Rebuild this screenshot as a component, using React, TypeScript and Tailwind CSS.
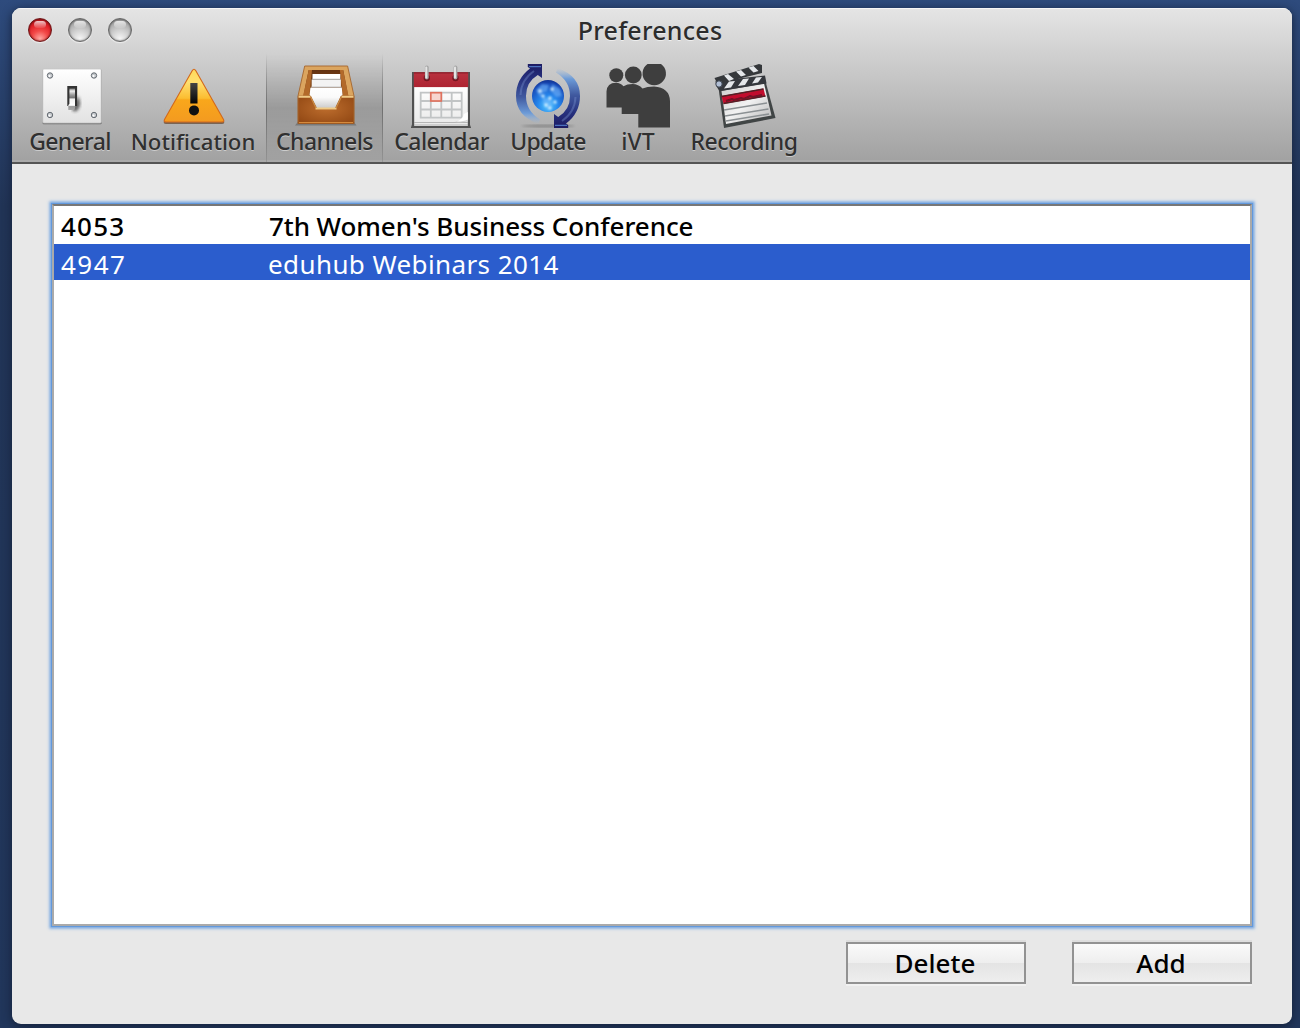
import type { ReactNode } from "react";

function Icon({ children }: { children: ReactNode }) {
  return (
    <svg viewBox="0 0 64 64" className="block size-16 overflow-visible">
      {children}
    </svg>
  );
}

function SwitchIcon() {
  return (
    <Icon>
      <defs>
        <linearGradient id="plate" x2="0" y2="1">
          <stop offset="0" stopColor="#fff" />
          <stop offset="1" stopColor="#e2e2e2" />
        </linearGradient>
        <linearGradient id="lever" x2="0" y2="1">
          <stop offset="0" stopColor="#777" />
          <stop offset=".12" stopColor="#eee" />
          <stop offset=".3" stopColor="#999" />
          <stop offset=".42" stopColor="#777" />
          <stop offset=".5" stopColor="#f4f4f4" />
          <stop offset=".78" stopColor="#fff" />
          <stop offset=".84" stopColor="#999" />
          <stop offset="1" stopColor="#aaa" />
        </linearGradient>
        <filter id="soft"><feGaussianBlur stdDeviation="1.7" /></filter>
      </defs>
      <rect x="2.6" y="5.6" width="59" height="54.6" rx="1" fill="#6d6d6d" />
      <rect x="2.8" y="5" width="58.4" height="54" rx="1" fill="url(#plate)" stroke="#c5c5c5" strokeWidth=".8" />
      {[[10, 11.5], [54, 11.5], [10, 51], [54, 51]].map(([x, y]) => (
        <g key={`${x}-${y}`}>
          <circle cx={x} cy={y} r="2.7" fill="#c4c8cc" stroke="#666c73" strokeWidth="1" />
          <circle cx={x - 0.5} cy={y + 0.6} r="1.1" fill="#fff" />
        </g>
      ))}
      <path d="M32 46l6-14q4 7 1 12-3 6-7 2z" fill="#222" opacity=".65" filter="url(#soft)" />
      <rect x="27.3" y="22" width="9.8" height="20" fill="#333" />
      <path d="M29.4 24.500h5.600V44l-.7 2H28.300V41l1.100-1z" fill="url(#lever)" />
    </Icon>
  );
}

function WarningIcon() {
  return (
    <Icon>
      <defs>
        <linearGradient id="warn" x2="0" y2="1">
          <stop offset="0" stopColor="#ffd95a" />
          <stop offset=".25" stopColor="#ffdf70" />
          <stop offset=".55" stopColor="#fbbd31" />
          <stop offset=".58" stopColor="#f9a71b" />
          <stop offset="1" stopColor="#f39a20" />
        </linearGradient>
        <linearGradient id="bang" x2="0" y2="1">
          <stop offset="0" stopColor="#444" />
          <stop offset="1" stopColor="#050505" />
        </linearGradient>
      </defs>
      <path d="M30.3 7.4Q32 4.4 33.7 7.4L62 57q1 3-2 3H4q-3 0-2-3z" fill="#5b3a20" opacity=".65" />
      <path d="M30.3 6.6Q32 3.8 33.7 6.6L61.5 55.4q1.2 2.6-1.8 2.6H4.3q-3 0-1.8-2.6z" fill="url(#warn)" stroke="#d3691c" strokeWidth="1.1" />
      <rect x="28.3" y="19" width="7.2" height="20.5" fill="url(#bang)" />
      <circle cx="32" cy="46.4" r="5" fill="#111" />
    </Icon>
  );
}

function TrayIcon() {
  return (
    <Icon>
      <defs>
        <linearGradient id="inside" x2="0" y2="1">
          <stop offset="0" stopColor="#633211" />
          <stop offset="1" stopColor="#9a5a25" />
        </linearGradient>
        <radialGradient id="front" cx=".5" cy=".45" r=".65">
          <stop offset="0" stopColor="#bd6d2d" />
          <stop offset="1" stopColor="#944a15" />
        </radialGradient>
        <linearGradient id="sheet" x2="0" y2="1">
          <stop offset="0" stopColor="#fff" />
          <stop offset=".45" stopColor="#fafafa" />
          <stop offset="1" stopColor="#c8c8c8" />
        </linearGradient>
      </defs>
      <path d="M1 61.5l4-5h54l3.5 5z" fill="#333" opacity=".35" />
      <path d="M10.7 2h42.9L60 32v27.500H4V32z" fill="#dba55f" stroke="#a5652c" strokeWidth=".9" />
      <path d="M14.7 6h34.5l5.4 27H9z" fill="url(#inside)" />
      <path d="M14.7 6h3.300L15 33H9z" fill="#b36a2a" />
      <path d="M49.2 6h-3.300L49 33h5.600z" fill="#b36a2a" />
      <path d="M18.5 10h27.8v5.500H18.5z" fill="#fff" />
      <path d="M17.7 15.500h29.200V23H17.7z" fill="#f3f3f3" />
      <path d="M18 15.3h28.600M17 23.2h30.700" stroke="#aaa" strokeWidth="1" />
      <path d="M16.4 23.8h31.400L48.5 31 41 45H23l-7.400-14z" fill="url(#sheet)" />
      <path d="M4.300 32h12.200L22 43q.5 2 2 2h16q1.500 0 2-2l5.200-11h12.500v27.300H4.300z" fill="url(#front)" stroke="#9c571f" strokeWidth=".8" />
      <path d="M4.500 32.800h12M21.500 44.400h21M47.500 32.800h12" fill="none" stroke="#f0ca86" strokeWidth="2" />
      <path d="M16.500 32.800L22 44M42 44l5.500-11.200" stroke="#c98a44" strokeWidth="1.200" />
      <path d="M5 58.5h54" stroke="#d58a3d" strokeWidth="1" />
    </Icon>
  );
}

function CalendarIcon() {
  return (
    <Icon>
      <defs>
        <linearGradient id="cal" x2="0" y2="1">
          <stop offset="0" stopColor="#fff" />
          <stop offset="1" stopColor="#e9e9e9" />
        </linearGradient>
        <linearGradient id="red" x2="0" y2="1">
          <stop offset="0" stopColor="#b9323f" />
          <stop offset="1" stopColor="#ad2331" />
        </linearGradient>
      </defs>
      <path d="M2 64l1.4-5h57L62 64z" fill="#444" />
      <rect x="3" y="8" width="58" height="56" fill="#515151" />
      <rect x="5.2" y="22" width="53.6" height="40" fill="url(#cal)" />
      <rect x="4.8" y="8.3" width="54.4" height="14.8" fill="url(#red)" />
      <path d="M5 9h54" stroke="#8b1d28" strokeWidth="1" />
      <path d="M5 58.5h54M5 61h54" stroke="#a7a7a7" strokeWidth=".8" />
      {[17.8, 46.5].map((x) => (
        <g key={x}>
          <circle cx={x} cy="14" r="3.2" fill="#741621" />
          <path d={`M${x} 3.5v10`} stroke="#a5a5a5" strokeWidth="3.8" strokeLinecap="round" />
          <path d={`M${x - 0.5} 3.5v10`} stroke="#e4e4e4" strokeWidth="2" strokeLinecap="round" />
        </g>
      ))}
      <path d="M11.7 28.7h41v25h-41zM11.7 37h41M11.7 45.5h41M21.8 28.7v25M32.3 28.7v25M42.7 28.7v25" fill="none" stroke="#c1c4c5" strokeWidth="1.8" />
      <rect x="21.8" y="28.7" width="10.5" height="8.3" fill="#f7d5cf" stroke="#df725f" strokeWidth="1.7" />
      <path d="M58.8 46q-1 9-13 12 9 .7 13-1z" fill="#d6d6d6" />
      <path d="M58.8 48l-4 2q-.5 5-7 7.500 7 0 11-2z" fill="#fff" />
    </Icon>
  );
}

function UpdateArrow() {
  return (
    <>
      <path d="M22.5 60Q0 52 0 32 0 15 14 4.5L11.8 3V0H26v14l-4.2-3Q10 18 10 32q0 15 14 23.5z" fill="url(#arc)" />
      <path d="M4.5 31Q5 16 18 7" fill="none" stroke="#7890cc" strokeWidth="2" opacity=".4" />
      <path d="M13 2.6h12" stroke="#4d72c0" strokeWidth="1.2" />
    </>
  );
}

function UpdateIcon() {
  return (
    <Icon>
      <defs>
        <linearGradient id="arc" x1="0" y1="0" x2="0" y2="60" gradientUnits="userSpaceOnUse">
          <stop offset="0" stopColor="#1d1c63" />
          <stop offset=".25" stopColor="#26307d" />
          <stop offset=".55" stopColor="#40599f" />
          <stop offset=".82" stopColor="#6c9bd8" />
          <stop offset="1" stopColor="#9ab8dc" stopOpacity="0" />
        </linearGradient>
        <radialGradient id="globe" cx=".5" cy=".8" r=".8">
          <stop offset="0" stopColor="#55c8ff" />
          <stop offset=".4" stopColor="#2586ec" />
          <stop offset=".85" stopColor="#1648b5" />
          <stop offset="1" stopColor="#123392" />
        </radialGradient>
        <filter id="glow"><feGaussianBlur stdDeviation=".8" /></filter>
        <filter id="ground"><feGaussianBlur stdDeviation="1.2" /></filter>
      </defs>
      <ellipse cx="32" cy="62" rx="27" ry="1.500" fill="#555" opacity=".4" filter="url(#ground)" />
      <UpdateArrow />
      <g transform="rotate(180 32 32)"><UpdateArrow /></g>
      <circle cx="32" cy="32" r="16" fill="url(#globe)" />
      <g filter="url(#glow)">
        <path d="M20 26l6-6 7 1-2 6-5 2-2 4zM36 20l8 5 2 7-6 1-5-6zM27 34l8 1 1 7-4 4-5-7z" fill="#73b5fb" opacity=".6" />
        {[[24, 27], [36, 25], [27, 32], [34, 34], [39, 38], [30, 41], [34, 44]].map(([x, y]) => (
          <circle key={`${x}-${y}`} cx={x} cy={y} r="1.6" fill="#e4f9ff" />
        ))}
      </g>
    </Icon>
  );
}

function PeopleIcon() {
  return (
    <Icon>
      <g fill="#3e3e3e">
        <circle cx="10.3" cy="11.3" r="7" />
        <circle cx="27.3" cy="11" r="8.4" />
        <path d="M41.5 0h13.500a11.700 11.700 0 1 1-13.500 0z" />
        <path d="M.5 43.500V27.500Q1 18.700 10 18.700q4.500 0 7.500 3.600 3.500-2.300 9-2.300 6 0 10 4.500 4.500-2 11.500-2 15.500 1 16 14.500v26.500H32.300V50H15.700v-6.500z" />
      </g>
    </Icon>
  );
}

function ClapperIcon() {
  return (
    <Icon>
      <defs>
        <linearGradient id="slate" x2="1" y2="1">
          <stop offset="0" stopColor="#ccc" />
          <stop offset=".5" stopColor="#f2f2f2" />
          <stop offset="1" stopColor="#b5b5b5" />
        </linearGradient>
        <filter id="fuzz"><feGaussianBlur stdDeviation=".75" /></filter>
      </defs>
      <g filter="url(#fuzz)">
        <path d="M5.500 24L52 15.500 62.500 54 11 64z" fill="#414445" />
        <path d="M8.500 27L51 19.500 58.500 51.500 13 60z" fill="url(#slate)" />
        <path d="M8.500 32l42-7.500 2 8L10.500 40z" fill="#c2112f" />
        <path d="M8.500 32.500l42-7.500M10.500 39.500l42-7.500" stroke="#522027" strokeWidth="1.300" />
        <path d="M13 37l6-2 2 1 7-2 3 1 6-3 3 1 9-2" stroke="#6f1226" strokeWidth="2" fill="none" />
        <path d="M11 46l43-7M12 52l43.500-7M13 57l43-7" stroke="#8b9093" strokeWidth="1.500" />
        <path d="M2.500 17L52 11.500l1.500 8L7 27q-4-3-4.500-10z" fill="#36393e" />
        <path d="M1.500 14L46 0l3 1v8L4.500 20z" fill="#34373b" />
        <path d="M11 11.500l4-1.500 6 5-5 2zM23 7.500l5-1.500 5 5-5 1.500zM35.500 3.500l5-1.500 5 5-5 1.500zM11 24.500l5-7 6-.5-4 6.500zM25 22l5-7 6-.5-4 6.500zM39 19.500l4-6 6-.5-4 5.500z" fill="#e4e7ea" />
        <circle cx="6" cy="20" r="3.200" fill="#b1bed4" stroke="#39404b" />
      </g>
    </Icon>
  );
}

function TrafficLight({ red = false }: { red?: boolean }) {
  return (
    <span
      className={
        red
          ? "relative size-6 rounded-full border border-[#6e1517] bg-[radial-gradient(circle_at_50%_90%,#ffaaa4_0%,#f34b49_35%,#df2027_65%,#8b1216_100%)] shadow-[0_1px_1px_#eee,inset_0_0_2px_#520606]"
          : "relative size-6 rounded-full border border-[#676767] bg-[radial-gradient(circle_at_50%_90%,#f6f6f6_0%,#cfcfcf_40%,#adadad_70%,#7a7a7a_100%)] shadow-[0_1px_1px_#eee,inset_0_0_2px_#444]"
      }
    >
      <span className="absolute left-[5px] top-[2px] h-[7px] w-3 rounded-full bg-linear-to-b from-white/75 to-white/10" />
    </span>
  );
}

const tools = [
  { label: "General", box: "w-[100px]", text: "text-[23px] tracking-[-0.65px]", icon: <SwitchIcon />, shift: "left-[2px]" },
  { label: "Notification", box: "w-[146px]", text: "text-[22.2px]", icon: <WarningIcon />, shift: "left-[1px]" },
  { label: "Channels", box: "w-[117px]", text: "text-[23px] tracking-[-0.6px]", icon: <TrayIcon />, shift: "left-[1px]", active: true },
  { label: "Calendar", box: "w-[117px]", text: "text-[23px] tracking-[-0.5px]", icon: <CalendarIcon />, shift: "left-[-1px]" },
  { label: "Update", box: "w-[96px]", text: "text-[23px] tracking-[-0.9px]", icon: <UpdateIcon />, shift: "" },
  { label: "iVT", box: "w-[84px]", text: "text-[23px]", icon: <PeopleIcon />, shift: "" },
  { label: "Recording", box: "w-[128px]", text: "text-[23px] tracking-[-0.5px]", icon: <ClapperIcon />, shift: "left-[1px]" },
];

export default function App() {
  return (
    <div className="h-[1028px] w-[1300px] overflow-hidden bg-linear-to-b from-[#2e4b7d] via-[#213456] via-20% to-[#21365b] pl-3 pr-2 pt-2 font-['Noto_Sans',sans-serif]">
      <main className="flex h-[1016px] w-[1280px] flex-col overflow-hidden rounded-[9px] bg-[#e8e8e8] shadow-[0_2px_10px_#14213a]">
        <header className="h-[156px] shrink-0 border-b-2 border-[#555] bg-linear-to-b from-[#e5e5e5] to-[#a1a1a1] shadow-[inset_0_1px_0_#f5f5f5,inset_0_-2px_0_#aaa]">
          <div className="grid h-[46px] grid-cols-[1fr_auto_1fr] items-center px-4">
            <div className="flex gap-4 pb-0.5">
              <TrafficLight red />
              <TrafficLight />
              <TrafficLight />
            </div>
            <h1 className="pb-0.5 pr-1 text-[25px] font-medium leading-[44px] tracking-[0.25px] text-[#2c2c2c] [text-shadow:0_1px_0_#eee]">
              Preferences
            </h1>
          </div>
          <nav className="flex h-[108px] pl-2">
            {tools.map((t) => (
              <div
                key={t.label}
                className={`flex shrink-0 flex-col items-center pt-[10px] ${t.box} ${
                  t.active
                    ? "border-x border-[#777]/70 bg-[linear-gradient(to_bottom,transparent,rgba(0,0,0,.16)_50%,transparent)] [border-image:linear-gradient(to_bottom,transparent,#707070_50%,#8888)_1]"
                    : ""
                }`}
              >
                <div className={`relative ${t.shift}`}>{t.icon}</div>
                <span className={`whitespace-nowrap font-medium leading-[27px] text-[#303030] [text-shadow:0_1px_0_#ccc] ${t.text}`}>
                  {t.label}
                </span>
              </div>
            ))}
          </nav>
        </header>

        <section className="flex flex-col px-10 pt-10">
          <div className="h-[722px] w-[1200px] border-2 border-[#aaa] border-t-[#777] bg-white text-[26px] leading-9 shadow-[0_0_0_1px_#6299dd,0_0_2px_2px_#7fabe0,0_0_3px_3px_#a9c5e6]">
            <div className="flex h-[38px] items-center font-medium text-black">
              <span className="w-[208px] pl-[7px] pt-px tracking-[1.2px]">4053</span>
              <span className="pl-[7px] pt-px tracking-[-0.07px]">7th Women's Business Conference</span>
            </div>
            <div className="flex h-9 items-center bg-[#2b5dcd] text-white">
              <span className="w-[208px] pl-[7px] pt-1 tracking-[1.5px]">4947</span>
              <span className="pl-[6px] pt-1 tracking-[0.4px]">eduhub Webinars 2014</span>
            </div>
          </div>
          <div className="mt-4 flex justify-end gap-[46px] text-[26px] font-medium text-black">
            {["Delete", "Add"].map((label) => (
              <button
                key={label}
                className="flex h-[42px] w-[180px] items-center justify-center border-2 border-[#929292] bg-[linear-gradient(to_bottom,#fafafa,#eee_50%,#e4e4e4_51%,#eee)] leading-[38px] shadow-[0_2px_0_#f1f1f1,0_-2px_0_#dedede]"
              >
                <span className="relative right-[1px]">{label}</span>
              </button>
            ))}
          </div>
        </section>
      </main>
    </div>
  );
}
